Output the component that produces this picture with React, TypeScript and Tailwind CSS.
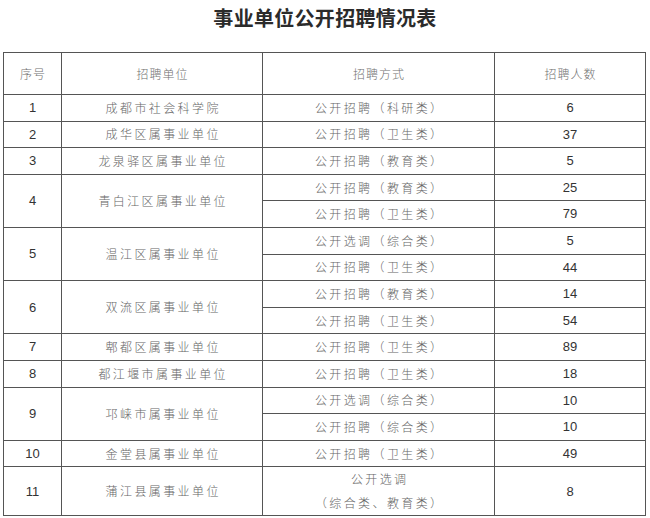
import React from "react";

type Item = { way: string; count: string };
type Row = { no: string; unit: string; items: Item[]; tall?: boolean };

const ROWS: Row[] = [
  { no: "1", unit: "成都市社会科学院", items: [{ way: "公开招聘（科研类）", count: "6" }] },
  { no: "2", unit: "成华区属事业单位", items: [{ way: "公开招聘（卫生类）", count: "37" }] },
  { no: "3", unit: "龙泉驿区属事业单位", items: [{ way: "公开招聘（教育类）", count: "5" }] },
  {
    no: "4",
    unit: "青白江区属事业单位",
    items: [
      { way: "公开招聘（教育类）", count: "25" },
      { way: "公开招聘（卫生类）", count: "79" },
    ],
  },
  {
    no: "5",
    unit: "温江区属事业单位",
    items: [
      { way: "公开选调（综合类）", count: "5" },
      { way: "公开招聘（卫生类）", count: "44" },
    ],
  },
  {
    no: "6",
    unit: "双流区属事业单位",
    items: [
      { way: "公开招聘（教育类）", count: "14" },
      { way: "公开招聘（卫生类）", count: "54" },
    ],
  },
  { no: "7", unit: "郫都区属事业单位", items: [{ way: "公开招聘（卫生类）", count: "89" }] },
  { no: "8", unit: "都江堰市属事业单位", items: [{ way: "公开招聘（卫生类）", count: "18" }] },
  {
    no: "9",
    unit: "邛崃市属事业单位",
    items: [
      { way: "公开选调（综合类）", count: "10" },
      { way: "公开招聘（综合类）", count: "10" },
    ],
  },
  { no: "10", unit: "金堂县属事业单位", items: [{ way: "公开招聘（卫生类）", count: "49" }] },
  {
    no: "11",
    unit: "蒲江县属事业单位",
    items: [{ way: "公开选调\n（综合类、教育类）", count: "8" }],
    tall: true,
  },
];

const cjk = "font-['Noto_Sans_CJK_SC',sans-serif]";
const num = "font-['Liberation_Sans',Arial,sans-serif] text-[13px] text-[#333]";
const cell = "border border-[#555] text-center align-middle p-0";
const zh = `${cjk} font-light text-[12px] tracking-[2.4px] pl-[2.4px] text-[#666]`;

export default function App() {
  return (
    <div className="w-[650px] h-[518px] bg-white overflow-hidden">
      <h1
        className={`${cjk} h-[36px] flex items-center justify-center text-[20px] font-bold tracking-[0.3px] text-[#2b2b2b]`}
      >
        事业单位公开招聘情况表
      </h1>
      <div className="pt-[16px] pl-[3px]">
        <table className="border-collapse table-fixed w-[642px]">
          <colgroup>
            <col className="w-[58px]" />
            <col className="w-[201px]" />
            <col className="w-[232px]" />
            <col className="w-[151px]" />
          </colgroup>
          <thead>
            <tr className="h-[42px]">
              {["序号", "招聘单位", "招聘方式", "招聘人数"].map((h) => (
                <th
                  key={h}
                  className={`${cell} ${cjk} font-light text-[12px] tracking-[1px] pl-[1px] text-[#707070]`}
                >
                  {h}
                </th>
              ))}
            </tr>
          </thead>
          <tbody>
            {ROWS.map((row) =>
              row.items.map((item, i) => (
                <tr
                  key={`${row.no}-${i}`}
                  className={row.tall ? "h-[47px]" : "h-[26.6px]"}
                >
                  {i === 0 && (
                    <>
                      <td rowSpan={row.items.length} className={`${cell} ${num}`}>
                        {row.no}
                      </td>
                      <td rowSpan={row.items.length} className={`${cell} ${zh}`}>
                        {row.unit}
                      </td>
                    </>
                  )}
                  <td className={`${cell} ${zh} whitespace-pre-line leading-[24px]`}>
                    {item.way}
                  </td>
                  <td className={`${cell} ${num}`}>{item.count}</td>
                </tr>
              ))
            )}
          </tbody>
        </table>
      </div>
    </div>
  );
}
